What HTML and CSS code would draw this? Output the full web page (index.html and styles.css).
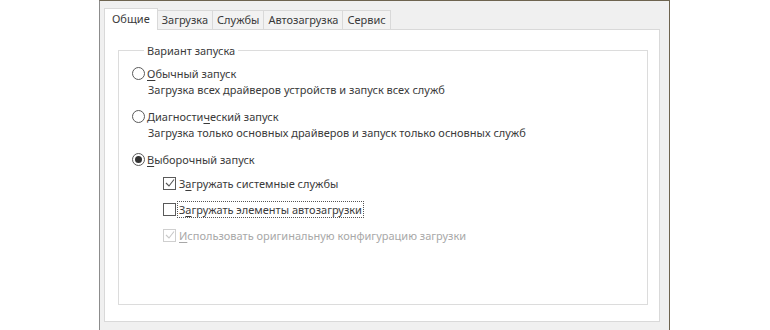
FILE: index.html
```html
<!doctype html>
<html lang="ru">
<head>
    <meta charset="UTF-8">
    <title>Конфигурация системы</title>
    <link rel="stylesheet" href="styles.css">
</head>
<body>

    <div class="window">
        <ul class="tabs">
            <li class="active">Общие</li>
            <li>Загрузка</li>
            <li>Службы</li>
            <li>Автозагрузка</li>
            <li>Сервис</li>
        </ul>
        <div class="panel">
            <fieldset class="group">
                <legend>Вариант запуска</legend>

                <div class="option">
                    <span class="radio"></span>
                    <span class="label"><u>О</u>бычный запуск</span>
                </div>
                <div class="desc">Загрузка всех драйверов устройств и запуск всех служб</div>

                <div class="option">
                    <span class="radio"></span>
                    <span class="label">Диагности<u>ч</u>еский запуск</span>
                </div>
                <div class="desc">Загрузка только основных драйверов и запуск только основных служб</div>

                <div class="option">
                    <span class="radio checked"></span>
                    <span class="label"><u>В</u>ыборочный запуск</span>
                </div>

                <div class="sub">
                    <div class="check-row">
                        <span class="check"><svg width="10" height="10" viewBox="0 0 10 10"><path d="M1 5 L4 8 L9 1.5" fill="none" stroke="#555" stroke-width="1.1"/></svg></span>
                        <span class="label">З<u>а</u>гружать системные службы</span>
                    </div>
                    <div class="check-row">
                        <span class="check"></span>
                        <span class="label focus">З<u>а</u>гружать элементы автозагрузки</span>
                    </div>
                    <div class="check-row disabled">
                        <span class="check"><svg width="10" height="10" viewBox="0 0 10 10"><path d="M1 5 L4 8 L9 1.5" fill="none" stroke="#c8c8c8" stroke-width="1.1"/></svg></span>
                        <span class="label"><u>И</u>спользовать оригинальную конфигурацию загрузки</span>
                    </div>
                </div>
            </fieldset>
        </div>
    </div>

</body>
</html>
```

FILE: styles.css
```css
*{
    padding: 0;
    margin: 0;
    box-sizing: border-box;
}
body{
    background-color: #fff;
    font-family: "Noto Sans", "Open Sans", sans-serif;
    font-size: 11px;
    color: #3a3a3a;
}
u{
    text-decoration: underline;
    text-underline-offset: 2px;
}
.window{
    width: 571px;
    height: 330px;
    margin-left: 99px;
    padding: 7px 9px 0 4px;
    background-color: #f0f0f0;
    border-top: 1px solid #6e6450;
    border-left: 1px solid #8c8c8c;
    border-right: 1px solid #6e6450;
}
.tabs{
    display: flex;
    align-items: flex-end;
    height: 21px;
    list-style: none;
}
.tabs li{
    height: 19px;
    line-height: 17px;
    padding: 0 4px;
    border: 1px solid #d9d9d9;
    border-left: none;
    border-bottom: none;
    background-color: #f2f2f2;
}
.tabs li.active{
    height: 22px;
    line-height: 19px;
    padding: 0 7px;
    margin-bottom: -1px;
    position: relative;
    border-left: 1px solid #d9d9d9;
    background-color: #fff;
}
.panel{
    height: 293px;
    padding: 13px 11px 0 13px;
    background-color: #fff;
    border: 1px solid #d9d9d9;
}
.group{
    height: 262px;
    padding: 4px 0 0 13px;
    border: 1px solid #dcdcdc;
}
.group legend{
    margin-left: 12px;
    padding: 0 3px 0 3px;
}
.option{
    display: flex;
    align-items: center;
    height: 18px;
    margin-top: 2px;
}
.radio{
    width: 13px;
    height: 13px;
    margin-right: 2px;
    border: 1px solid #5a5a5a;
    border-radius: 50%;
    display: flex;
    align-items: center;
    justify-content: center;
}
.radio.checked::after{
    content: "";
    width: 7px;
    height: 7px;
    border-radius: 50%;
    background-color: #333;
}
.desc{
    height: 18px;
    line-height: 18px;
    margin: -1px 0 8px 16px;
}
.sub{
    padding: 6px 0 0 31px;
}
.check-row{
    display: flex;
    align-items: center;
    height: 18px;
    margin-bottom: 8px;
}
.check{
    width: 13px;
    height: 13px;
    margin-right: 2px;
    border: 1px solid #5a5a5a;
    background-color: #fff;
    display: flex;
    align-items: center;
    justify-content: center;
}
.check-row .label{
    padding: 0 1px;
}
.focus{
    outline: 1px dotted #555;
}
.disabled{
    color: #a8a8a8;
}
.disabled .check{
    border-color: #cfcfcf;
}
```
